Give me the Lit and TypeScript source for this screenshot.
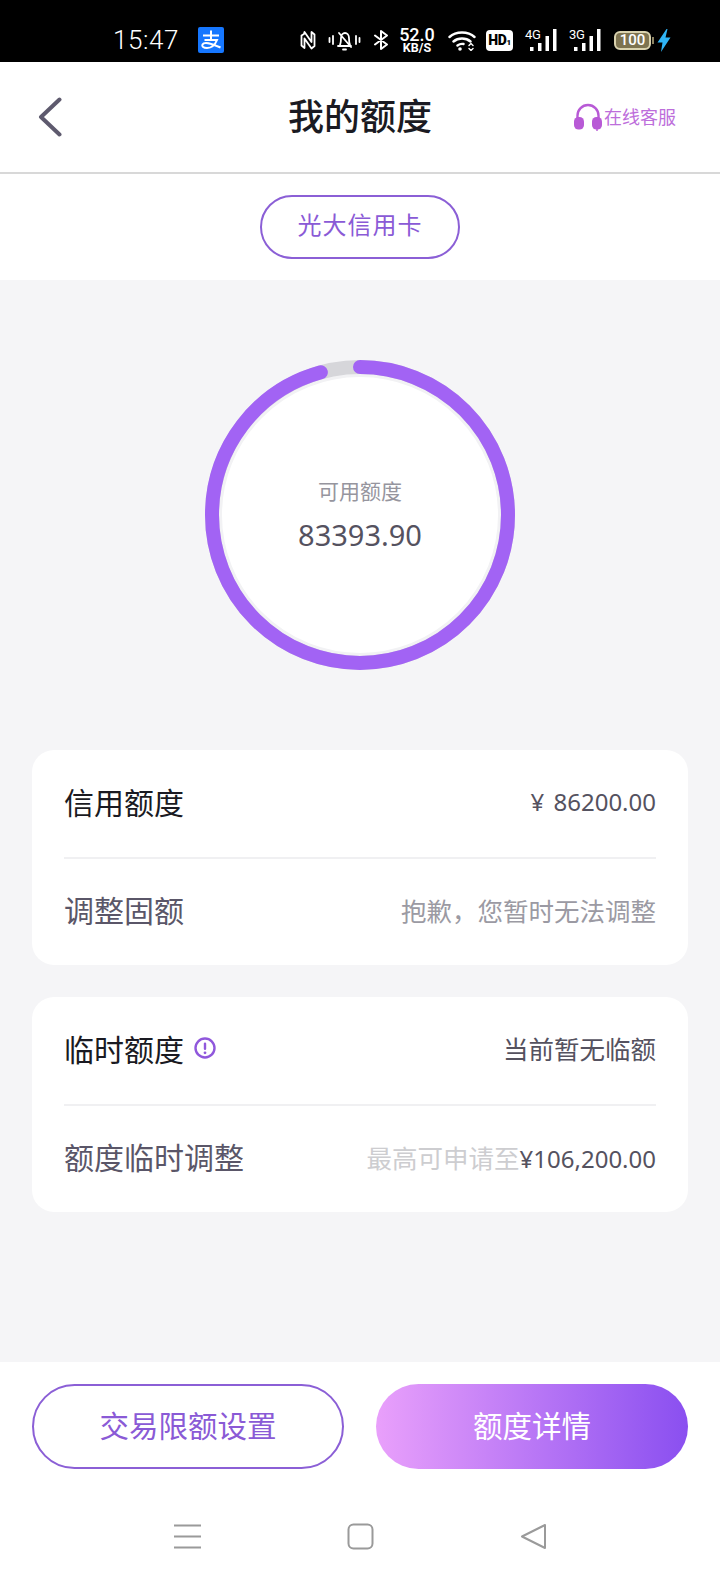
import { LitElement, html, css, svg } from "lit";
import { customElement, property } from "lit/decorators.js";

const RING_RADIUS = 148;
const RING_USED = 0.957;

@customElement("status-bar")
export class StatusBar extends LitElement {
  protected render() {
    return html`
      <span class="time">15:47</span>
      <svg class="alipay" viewBox="0 0 26 26">
        <rect width="26" height="26" rx="2" fill="#1677ff" />
        <path d="M5 8.5h16M13 3.5v9.5M6.5 13h12.5c-2 5-6 8-10 8-3.5 0-5.5-1.5-4.5-3.5 1.2-2.4 7-2.2 18 3" fill="none" stroke="#fff" stroke-width="2" />
      </svg>
      <svg class="nfc" viewBox="0 0 16 20" fill="none" stroke="#fff" stroke-width="1.8" stroke-linejoin="round">
        <path d="M4 4 L1.5 5.5 V15.5 L4.5 18 V8.5 L11.5 18.5 L14.5 16 V4.5 L11.5 2 V12 L4.5 2 Z" />
      </svg>
      <svg class="bell" viewBox="0 0 33 22" fill="none" stroke="#fff" stroke-width="1.8" stroke-linecap="round" stroke-linejoin="round">
        <path d="M1.5 9v4M5 7v8M28 7v8M31.5 9v4" />
        <path d="M10 17h13M12 16c1-2 1-4 1-7 0-3 2-5 4-5s4 2 4 5c0 3 0 5 1 7M11 4l12 14" />
        <path d="M15 20.5h3" />
      </svg>
      <svg class="bt" viewBox="0 0 16 20" fill="none" stroke="#fff" stroke-width="2" stroke-linejoin="round" stroke-linecap="round">
        <path d="M2 5.5 L14 14.5 L8 19 V1 L14 5.5 L2 14.5" />
      </svg>
      <span class="speed"><b>52.0</b><i>KB/S</i></span>
      <svg class="wifi" viewBox="0 0 28 21" fill="none" stroke="#fff" stroke-width="2.4" stroke-linecap="round">
        <path d="M1.5 7C8 1 20 1 26.5 7M5.5 11.5C10 7.5 18 7.5 22.5 11.5M9.5 15.5C11.5 14 13.5 13.6 15.5 14" />
        <circle cx="12" cy="19" r="1.8" fill="#fff" stroke="none" />
        <path d="M21 15.5l2-2 2 2M21 18.5l2 2 2-2" stroke-width="1.4" />
      </svg>
      <span class="hd">HD<small>1</small></span>
      <span class="net"><em>4G</em>${this.bars()}</span>
      <span class="net"><em>3G</em>${this.bars()}</span>
      <span class="battery"><span class="cell">100</span><span class="tip"></span></span>
      <svg class="bolt" viewBox="0 0 14 23">
        <path d="M9.5 0 L0.5 13.5 H5.5 L4 23 L13.5 8.5 H8.5 L10.5 0 Z" fill="#2fb4f5" />
      </svg>
    `;
  }

  private bars() {
    return html`<svg class="bars" viewBox="0 0 27 22" fill="#fff">
      <rect x="0" y="18" width="3.5" height="4" />
      <rect x="8" y="14" width="3.5" height="8" />
      <rect x="15.5" y="7" width="3.5" height="15" />
      <rect x="23" y="0" width="3.5" height="22" />
    </svg>`;
  }

  static styles = css`
    :host {
      display: flex;
      align-items: center;
      height: 62px;
      padding: 18px 0 0 113px;
      box-sizing: border-box;
      background: #000;
      color: #fff;
      font-family: "Roboto", "Noto Sans CJK SC", sans-serif;
    }
    svg {
      display: block;
      flex: none;
    }
    .time {
      width: 85px;
      font-size: 26px;
      font-weight: 300;
      letter-spacing: 0.6px;
    }
    .alipay {
      width: 26px;
      height: 26px;
    }
    .nfc {
      width: 16px;
      height: 20px;
      margin-left: 76px;
    }
    .bell {
      width: 33px;
      height: 22px;
      margin-left: 12px;
    }
    .bt {
      width: 16px;
      height: 20px;
      margin-left: 12px;
    }
    .speed {
      display: flex;
      flex-direction: column;
      align-items: center;
      width: 36px;
      margin-left: 10px;
      line-height: 1;
    }
    .speed b {
      font-size: 18px;
      font-weight: 500;
      line-height: 15px;
    }
    .speed i {
      font-size: 12.5px;
      font-style: normal;
      font-weight: 700;
      line-height: 12px;
    }
    .wifi {
      width: 28px;
      height: 21px;
      margin-left: 13px;
    }
    .hd {
      width: 27px;
      height: 21px;
      margin-left: 10px;
      border-radius: 4px;
      background: #fff;
      color: #000;
      font-size: 14px;
      font-weight: 900;
      line-height: 21px;
      text-align: center;
      letter-spacing: -0.4px;
    }
    .hd small {
      font-size: 8px;
    }
    .net {
      position: relative;
      width: 32px;
      height: 22px;
      margin-left: 12px;
    }
    .net em {
      position: absolute;
      left: 0;
      top: -1px;
      font-size: 13px;
      font-style: normal;
      font-weight: 400;
      line-height: 13px;
      letter-spacing: -0.3px;
    }
    .bars {
      position: absolute;
      right: 0;
      bottom: 0;
      width: 27px;
      height: 22px;
    }
    .battery {
      display: flex;
      align-items: center;
      margin-left: 13px;
    }
    .cell {
      width: 37px;
      height: 19px;
      box-sizing: border-box;
      border: 2px solid #d9d2ae;
      border-radius: 6px;
      background: #7d7350;
      font-size: 15px;
      font-weight: 500;
      line-height: 15px;
      text-align: center;
    }
    .tip {
      width: 2px;
      height: 7px;
      margin-left: 1px;
      background: #8d8463;
    }
    .bolt {
      width: 14px;
      height: 23px;
      margin-left: 3px;
    }
  `;
}

@customElement("limit-ring")
export class LimitRing extends LitElement {
  @property({ type: Number }) public used = RING_USED;
  @property() public label = "";
  @property() public amount = "";

  protected render() {
    const full = 2 * Math.PI * RING_RADIUS;
    return html`
      <svg viewBox="0 0 310 310">
        ${svg`
          <circle cx="155" cy="155" r="140" fill="#fff" stroke="#f2f2f4" stroke-width="4" />
          <circle cx="155" cy="155" r=${RING_RADIUS} fill="none" stroke="#d6d6da" stroke-width="14" />
          <circle cx="155" cy="155" r=${RING_RADIUS} fill="none" stroke="#a263f4" stroke-width="14"
            stroke-linecap="round" stroke-dasharray="${full * this.used} ${full}"
            transform="rotate(-90 155 155)" />
        `}
      </svg>
      <div class="text">
        <span class="label">${this.label}</span>
        <span class="amount">${this.amount}</span>
      </div>
    `;
  }

  static styles = css`
    :host {
      display: grid;
      width: 310px;
      height: 310px;
    }
    svg,
    .text {
      grid-area: 1 / 1;
    }
    svg {
      display: block;
      width: 100%;
      height: 100%;
    }
    .text {
      display: flex;
      flex-direction: column;
      align-items: center;
      padding-top: 116px;
    }
    .label {
      color: #96959e;
      font-size: 21px;
      line-height: 30px;
    }
    .amount {
      margin-top: 9px;
      color: #55525f;
      font-size: 29px;
      line-height: 40px;
    }
  `;
}

@customElement("app-root")
export class AppRoot extends LitElement {
  protected render() {
    return html`
      <status-bar></status-bar>
      <header class="top">
        <svg class="back" viewBox="0 0 24 40" fill="none" stroke="#5e5a6e" stroke-width="4" stroke-linecap="round" stroke-linejoin="round">
          <path d="M21.5 2.5 L3 20 L21.5 37.5" />
        </svg>
        <h1>我的额度</h1>
        <div class="service">
          <svg viewBox="0 0 28 28" fill="none">
            <path d="M3.5 17V12.5a10.5 10.5 0 0 1 21 0V17" stroke="#b85ad6" stroke-width="2.4" />
            <rect x="0" y="14" width="10" height="12.5" rx="4.5" fill="#b85ad6" />
            <rect x="18" y="14" width="10" height="12.5" rx="4.5" fill="#b85ad6" />
            <path d="M23 26v2" stroke="#b85ad6" stroke-width="1.4" />
          </svg>
          <span>在线客服</span>
        </div>
      </header>
      <div class="tabs"><span class="pill">光大信用卡</span></div>
      <main>
        <limit-ring label="可用额度" amount="83393.90"></limit-ring>
        <section class="card first">
          <div class="row">
            <span class="title">信用额度</span>
            <span class="value"><span class="num wide">¥ 86200.00</span></span>
          </div>
          <div class="row">
            <span class="title soft">调整固额</span>
            <span class="value muted">抱歉，您暂时无法调整</span>
          </div>
        </section>
        <section class="card">
          <div class="row">
            <span class="title">临时额度
              <svg class="info" viewBox="0 0 22 22" fill="none">
                <circle cx="11" cy="11" r="9.5" stroke="#9058dc" stroke-width="2.4" />
                <rect x="9.8" y="5.5" width="2.4" height="7.5" rx="1.2" fill="#9058dc" />
                <circle cx="11" cy="15.8" r="1.4" fill="#9058dc" />
              </svg>
            </span>
            <span class="value">当前暂无临额</span>
          </div>
          <div class="row">
            <span class="title soft">额度临时调整</span>
            <span class="value"><span class="faint">最高可申请至</span><span class="num">¥106,200.00</span></span>
          </div>
        </section>
      </main>
      <footer>
        <div class="actions">
          <button class="ghost">交易限额设置</button>
          <button class="solid">额度详情</button>
        </div>
        <nav>
          <svg viewBox="0 0 27 26" fill="none" stroke="#9a9a9a" stroke-width="2">
            <path d="M0 2h27M0 13h27M0 24h27" />
          </svg>
          <svg viewBox="0 0 27 27" fill="none" stroke="#9a9a9a" stroke-width="2">
            <rect x="1.5" y="1.5" width="24" height="24" rx="5" />
          </svg>
          <svg viewBox="0 0 27 27" fill="none" stroke="#9a9a9a" stroke-width="2" stroke-linejoin="round">
            <path d="M25 2 V25 L2 13.5 Z" />
          </svg>
        </nav>
      </footer>
    `;
  }

  static styles = css`
    :host {
      display: flex;
      flex-direction: column;
      width: 720px;
      height: 1584px;
      background: #fff;
      font-family: "Noto Sans", "Noto Sans CJK SC", sans-serif;
    }
    .top {
      display: flex;
      align-items: center;
      justify-content: space-between;
      height: 110px;
      padding: 0 44px 0 38px;
      border-bottom: 2px solid #d8d8d8;
      position: relative;
    }
    .back {
      width: 24px;
      height: 40px;
    }
    h1 {
      position: absolute;
      left: 0;
      right: 0;
      margin: 0;
      padding-bottom: 5px;
      color: #1a1a22;
      font-size: 36px;
      font-weight: 500;
      text-align: center;
      pointer-events: none;
    }
    .service {
      display: flex;
      align-items: center;
      gap: 2px;
      color: #bd6edb;
      font-size: 18px;
    }
    .service span {
      padding-bottom: 3px;
    }
    .service svg {
      width: 28px;
      height: 28px;
    }
    .tabs {
      display: flex;
      justify-content: center;
      height: 106px;
      padding-top: 21px;
      box-sizing: border-box;
    }
    .pill {
      width: 200px;
      height: 64px;
      box-sizing: border-box;
      border: 2px solid #8b5fd6;
      border-radius: 32px;
      color: #8a5ad6;
      font-size: 24px;
      letter-spacing: 1px;
      line-height: 56px;
      text-align: center;
    }
    main {
      flex: 1;
      display: flex;
      flex-direction: column;
      align-items: center;
      padding: 80px 32px 0;
      background: #f5f5f7;
    }
    .card {
      align-self: stretch;
      margin-top: 32px;
      padding: 0 32px;
      border-radius: 22px;
      background: #fff;
    }
    .card.first {
      margin-top: 80px;
    }
    .row {
      display: flex;
      align-items: center;
      justify-content: space-between;
      height: 107px;
      padding-bottom: 6px;
      box-sizing: border-box;
    }
    .row + .row {
      border-top: 2px solid #f0f0f2;
      height: 108px;
    }
    .title {
      display: flex;
      align-items: center;
      color: #1a1a22;
      font-size: 30px;
    }
    .title.soft {
      color: #5a5668;
    }
    .info {
      width: 22px;
      height: 22px;
      margin-left: 10px;
    }
    .value {
      color: #55525f;
      font-size: 25.5px;
    }
    .value.muted {
      color: #9b9aa3;
    }
    .num {
      font-size: 24px;
    }
    .num.wide {
      word-spacing: 3px;
    }
    .faint {
      color: #cdcdd0;
    }
    footer {
      height: 222px;
      padding: 22px 32px 0;
      box-sizing: border-box;
    }
    .actions {
      display: grid;
      grid-template-columns: 1fr 1fr;
      gap: 32px;
    }
    button {
      height: 85px;
      padding: 0 0 5px;
      box-sizing: border-box;
      border-radius: 43px;
      font-family: inherit;
      font-size: 29.5px;
    }
    .ghost {
      border: 2px solid #8b5fd6;
      background: #fff;
      color: #8a5ad6;
    }
    .solid {
      border: 0;
      background: linear-gradient(90deg, #e9a0fb, #8a4ff0);
      color: #fff;
    }
    nav {
      display: flex;
      justify-content: center;
      gap: 146px;
      margin-top: 54px;
    }
    nav svg {
      width: 27px;
      height: 27px;
    }
  `;
}
